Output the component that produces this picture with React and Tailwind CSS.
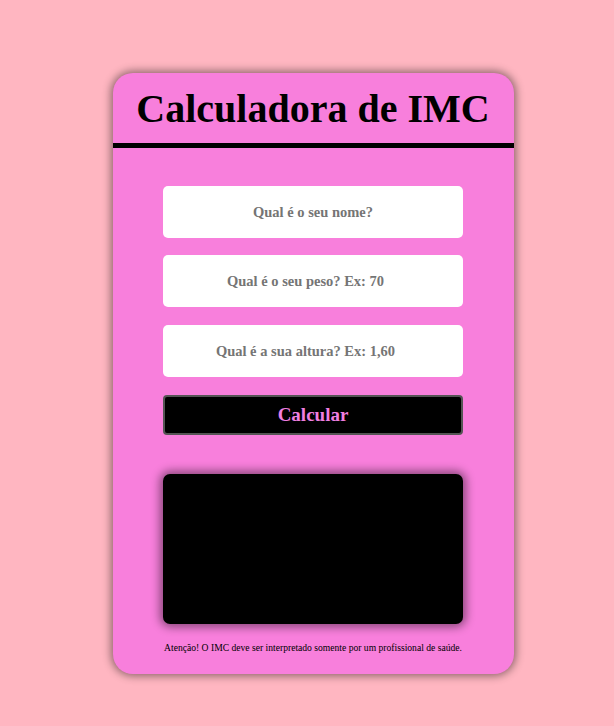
export default function App() {
  return (
    <div className="min-h-[726px] w-full bg-[#ffb6c1] pt-[73px] pl-[12px] font-['Liberation_Serif',serif]">
      <div className="mx-auto w-[401px] h-[601px] rounded-[20px] bg-[#f87fdc] shadow-[0_0_8px_2px_rgba(0,0,0,0.45)] flex flex-col overflow-hidden">
        {/* header */}
        <div className="h-[75px] border-b-[5px] border-black flex items-center justify-center">
          <h1 className="text-[40px] font-bold text-black leading-none mt-[2px]">Calculadora de IMC</h1>
        </div>

        <div className="flex flex-col items-center pt-[38px]">
          <input
            type="text"
            placeholder="Qual é o seu nome?"
            className="w-[300px] h-[52px] rounded-[5px] bg-white text-center text-[14.5px] font-bold text-[#757575] placeholder:text-[#757575] outline-none"
          />
          <input
            type="number"
            placeholder="Qual é o seu peso? Ex: 70"
            className="mt-[17px] w-[300px] h-[52px] rounded-[5px] bg-white text-center text-[14.5px] font-bold text-[#757575] placeholder:text-[#757575] outline-none"
          />
          <input
            type="number"
            placeholder="Qual é a sua altura? Ex: 1,60"
            className="mt-[18px] w-[300px] h-[52px] rounded-[5px] bg-white text-center text-[14.5px] font-bold text-[#757575] placeholder:text-[#757575] outline-none"
          />
          <button className="mt-[18px] w-[300px] h-[40px] rounded-[4px] bg-black border-2 border-[#555] text-[19px] font-bold text-[#f07fe0]">
            Calcular
          </button>

          <div className="mt-[39px] w-[300px] h-[150px] rounded-[7px] bg-black shadow-[0_0_10px_3px_rgba(0,0,0,0.45)]"></div>

          <p className="mt-[17px] text-[9.6px] text-black">
            Atenção! O IMC deve ser interpretado somente por um profissional de saúde.
          </p>
        </div>
      </div>
    </div>
  );
}
